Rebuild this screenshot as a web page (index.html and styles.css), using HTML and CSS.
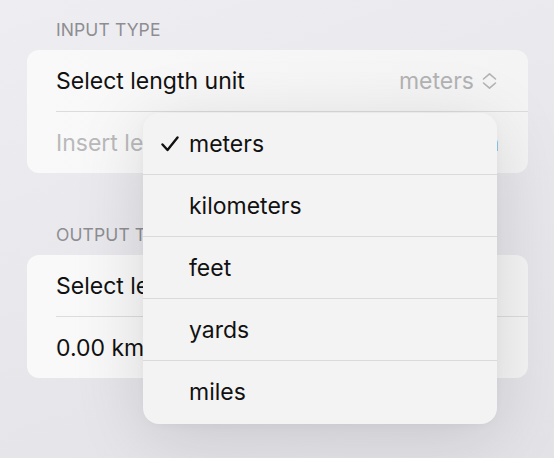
FILE: index.html
```html
<!DOCTYPE html>
<html lang="en">
<head>
<meta charset="utf-8">
<link rel="stylesheet" href="styles.css">
</head>
<body>
<main class="page">
  <section class="group">
    <div class="group-header">INPUT TYPE</div>
    <div class="card">
      <div class="row">
        <span class="label">Select length unit</span>
        <span class="picker">meters
          <svg class="updown" width="17" height="18" viewBox="0 0 17 18"><path d="M2.5 7 L8.5 1.8 L14.5 7 M2.5 11 L8.5 16.2 L14.5 11" fill="none" stroke="#b3b3b5" stroke-width="1.6" stroke-linecap="round" stroke-linejoin="round"/></svg>
        </span>
      </div>
      <div class="sep"></div>
      <div class="row">
        <span class="placeholder">Insert length</span>
        <span class="unit">m</span>
      </div>
    </div>
  </section>
  <section class="group group-second">
    <div class="group-header">OUTPUT TYPE</div>
    <div class="card">
      <div class="row">
        <span class="label">Select length unit</span>
        <span class="picker">kilometers
          <svg class="updown" width="17" height="18" viewBox="0 0 17 18"><path d="M2.5 7 L8.5 1.8 L14.5 7 M2.5 11 L8.5 16.2 L14.5 11" fill="none" stroke="#b3b3b5" stroke-width="1.6" stroke-linecap="round" stroke-linejoin="round"/></svg>
        </span>
      </div>
      <div class="sep"></div>
      <div class="row">
        <span class="label">0.00 km</span>
      </div>
    </div>
  </section>

  <div class="menu">
    <div class="menu-item">
      <svg class="check" width="18" height="16" viewBox="0 0 18 16"><path d="M1.5 8.5 L6.5 14 L16.5 1.5" fill="none" stroke="#111" stroke-width="2.4" stroke-linecap="round" stroke-linejoin="round"/></svg>
      <span>meters</span>
    </div>
    <div class="menu-item"><span class="spacer"></span><span>kilometers</span></div>
    <div class="menu-item"><span class="spacer"></span><span>feet</span></div>
    <div class="menu-item"><span class="spacer"></span><span>yards</span></div>
    <div class="menu-item last"><span class="spacer"></span><span>miles</span></div>
  </div>
</main>
</body>
</html>
```

FILE: styles.css
```css
* { box-sizing: border-box; }
html, body {
  margin: 0;
  padding: 0;
}
body {
  width: 554px;
  height: 458px;
  overflow: hidden;
  background: linear-gradient(160deg, #eeeef2 0%, #e6e6eb 60%, #e2e2e7 100%);
  font-family: Inter, "Noto Sans", sans-serif;
  color: #111;
}
.page {
  position: relative;
  height: 458px;
  padding: 19px 26px 0 27px;
}
.group-header {
  height: 22px;
  line-height: 22px;
  font-size: 17.5px;
  color: #8e8e92;
  padding-left: 29px;
  margin-bottom: 9px;
  letter-spacing: 0.1px;
}
.group-second {
  margin-top: 51px;
}
.card {
  background: linear-gradient(90deg, #f9f9f9 0%, #f4f4f5 100%);
  border-radius: 12px;
  overflow: hidden;
}
.row {
  height: 61px;
  display: flex;
  align-items: center;
  justify-content: space-between;
  padding: 0 30px 0 29px;
  font-size: 23px;
}
.sep {
  height: 1px;
  margin-left: 29px;
  background: #dcdcde;
}
.label { color: #111; }
.placeholder { color: #b9b9bb; }
.unit { color: #111; margin-right: -1px; }
.picker {
  color: #b3b3b5;
  display: flex;
  align-items: center;
  gap: 7px;
}
.updown { display: block; }
.menu {
  position: absolute;
  left: 143px;
  top: 113px;
  width: 354px;
  height: 311px;
  background: #f3f3f4;
  border-radius: 16px;
  box-shadow: 0 12px 70px rgba(0, 0, 0, 0.13), 0 2px 10px rgba(0, 0, 0, 0.03);
  overflow: hidden;
}
.menu-item {
  height: 62px;
  display: flex;
  align-items: center;
  padding-left: 18px;
  font-size: 23px;
  color: #111;
  border-bottom: 1px solid #dadadc;
}
.menu-item.last { border-bottom: none; }
.check {
  display: block;
  width: 18px;
  margin-right: 10px;
}
.spacer {
  display: block;
  width: 18px;
  margin-right: 10px;
}
```
